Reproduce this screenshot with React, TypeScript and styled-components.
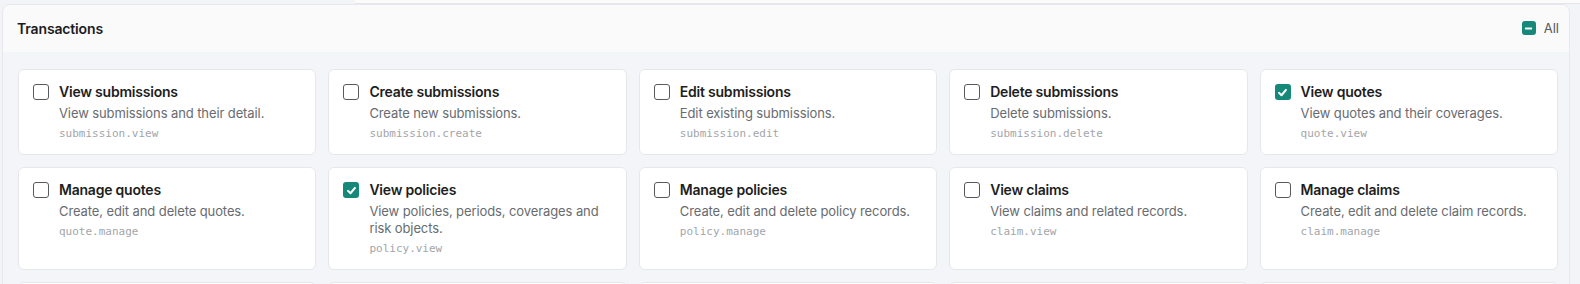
import React from "react";
import styled, { createGlobalStyle } from "styled-components";

const Global = createGlobalStyle`
  html, body { margin: 0; padding: 0; background: #f3f4f7; overflow: hidden; }
  body { font-family: Inter, "Noto Sans", sans-serif; -webkit-font-smoothing: antialiased; }
  * { box-sizing: border-box; }
`;

const Page = styled.div`
  padding: 0 10px 0 2px;
`;

const TopStrip = styled.div`
  height: 4px;
  margin-left: 353px;
  margin-right: -10px;
  border-bottom: 1px solid #e4e5ea;
  background: #fbfbfc;
`;

const Panel = styled.section`
  border: 1px solid #e7e8ec;
  border-radius: 8px;
  background: #f4f5f8;
  overflow: hidden;
`;

const Header = styled.header`
  display: flex;
  align-items: center;
  justify-content: space-between;
  height: 47px;
  padding: 0 10px 1px 14px;
  background: #fafafb;
`;

const Title = styled.h2`
  margin: 0;
  font-size: 14px;
  font-weight: 600;
  color: #1b1c1f;
  letter-spacing: -0.15px;
`;

const AllToggle = styled.label`
  display: flex;
  align-items: center;
  gap: 8px;
  font-size: 13px;
  color: #55585d;
`;

const Box = styled.span<{ $checked?: boolean; $size?: number }>`
  flex: none;
  width: ${(p) => p.$size ?? 16}px;
  height: ${(p) => p.$size ?? 16}px;
  border-radius: 3px;
  display: inline-flex;
  align-items: center;
  justify-content: center;
  background: ${(p) => (p.$checked ? "#15887a" : "#fff")};
  border: ${(p) => (p.$checked ? "none" : "1.5px solid #58595d")};
`;

const Grid = styled.div`
  display: grid;
  grid-template-columns: repeat(5, 1fr);
  gap: 12px;
  padding: 17px 11px 0 15px;
`;

const Card = styled.label`
  display: flex;
  align-items: flex-start;
  gap: 10px;
  padding: 12px 14px;
  background: #fff;
  border: 1px solid #e6e7eb;
  border-radius: 6px;
`;

const BoxWrap = styled.span`
  display: flex;
  padding-top: 2px;
`;

const Body = styled.div`
  display: flex;
  flex-direction: column;
  min-width: 0;
`;

const CardTitle = styled.div`
  font-size: 14px;
  line-height: 20px;
  font-weight: 600;
  color: #1d1e21;
  letter-spacing: -0.22px;
`;

const Desc = styled.div`
  margin-top: 3px;
  font-size: 13px;
  line-height: 17px;
  color: #686b70;
  letter-spacing: -0.1px;
`;

const Code = styled.div`
  margin-top: 4px;
  font-family: "DejaVu Sans Mono", "Liberation Mono", monospace;
  font-size: 11px;
  line-height: 16px;
  color: #a3a5a9;
`;

const Check = () => (
  <svg width="11" height="11" viewBox="0 0 12 12" fill="none">
    <path d="M2.2 6.4 L4.9 9 L9.8 3.2" stroke="#fff" strokeWidth="2.2" strokeLinecap="round" strokeLinejoin="round" />
  </svg>
);

const Minus = () => (
  <svg width="9" height="9" viewBox="0 0 10 10">
    <rect x="1" y="4" width="8" height="2" rx="0.8" fill="#fff" />
  </svg>
);

type Perm = { title: string; desc: string; code: string; checked?: boolean };

const perms: Perm[] = [
  { title: "View submissions", desc: "View submissions and their detail.", code: "submission.view" },
  { title: "Create submissions", desc: "Create new submissions.", code: "submission.create" },
  { title: "Edit submissions", desc: "Edit existing submissions.", code: "submission.edit" },
  { title: "Delete submissions", desc: "Delete submissions.", code: "submission.delete" },
  { title: "View quotes", desc: "View quotes and their coverages.", code: "quote.view", checked: true },
  { title: "Manage quotes", desc: "Create, edit and delete quotes.", code: "quote.manage" },
  { title: "View policies", desc: "View policies, periods, coverages and risk objects.", code: "policy.view", checked: true },
  { title: "Manage policies", desc: "Create, edit and delete policy records.", code: "policy.manage" },
  { title: "View claims", desc: "View claims and related records.", code: "claim.view" },
  { title: "Manage claims", desc: "Create, edit and delete claim records.", code: "claim.manage" },
  { title: "View invoices", desc: "View invoices and payments.", code: "invoice.view" },
  { title: "Manage invoices", desc: "Create, edit and delete invoices.", code: "invoice.manage" },
  { title: "View documents", desc: "View generated documents.", code: "document.view" },
  { title: "Manage documents", desc: "Generate and delete documents.", code: "document.manage" },
  { title: "View parties", desc: "View parties and contacts.", code: "party.view" },
];

export default function App() {
  return (
    <>
      <Global />
      <Page>
        <TopStrip />
        <Panel>
          <Header>
            <Title>Transactions</Title>
            <AllToggle>
              <Box $checked $size={14}>
                <Minus />
              </Box>
              All
            </AllToggle>
          </Header>
          <Grid>
            {perms.map((p) => (
              <Card key={p.code}>
                <BoxWrap>
                  <Box $checked={p.checked}>{p.checked && <Check />}</Box>
                </BoxWrap>
                <Body>
                  <CardTitle>{p.title}</CardTitle>
                  <Desc>{p.desc}</Desc>
                  <Code>{p.code}</Code>
                </Body>
              </Card>
            ))}
          </Grid>
        </Panel>
      </Page>
    </>
  );
}
